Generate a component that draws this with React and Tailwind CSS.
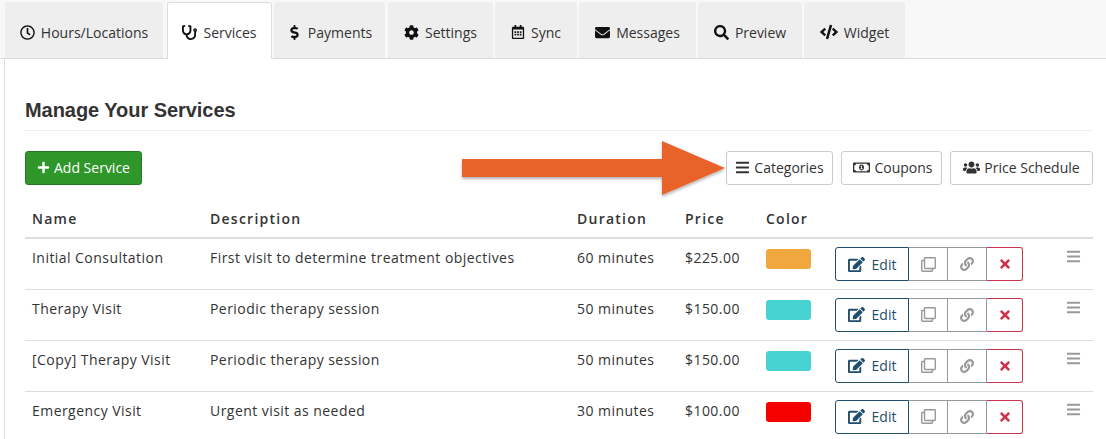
import { FaRegClock, FaStethoscope, FaDollarSign, FaCog, FaRegCalendarAlt, FaEnvelope, FaSearch, FaCode, FaPlus, FaBars, FaRegMoneyBillAlt, FaUsers, FaEdit, FaRegClone, FaLink, FaTimes } from "react-icons/fa";

const tabs = [
  { label: "Hours/Locations", icon: FaRegClock, w: "w-[158px]", size: "text-[15px]" },
  { label: "Services", icon: FaStethoscope, w: "w-[105px] ml-[2px]", size: "text-[15px]", active: true },
  { label: "Payments", icon: FaDollarSign, w: "w-[111px]", size: "text-[15px]" },
  { label: "Settings", icon: FaCog, w: "w-[105px] ml-px", size: "text-[15px]" },
  { label: "Sync", icon: FaRegCalendarAlt, w: "w-[82px]", size: "text-[14px]" },
  { label: "Messages", icon: FaEnvelope, w: "w-[117px]", size: "text-[15px]" },
  { label: "Preview", icon: FaSearch, w: "w-[104px]", size: "text-[15px]" },
  { label: "Widget", icon: FaCode, w: "w-[101px]", size: "text-[18px]" },
];

const services = [
  { name: "Initial Consultation", desc: "First visit to determine treatment objectives", dur: "60 minutes", price: "$225.00", color: "bg-[#f0a83e]" },
  { name: "Therapy Visit", desc: "Periodic therapy session", dur: "50 minutes", price: "$150.00", color: "bg-[#48d3d3]" },
  { name: "[Copy] Therapy Visit", desc: "Periodic therapy session", dur: "50 minutes", price: "$150.00", color: "bg-[#48d3d3]" },
  { name: "Emergency Visit", desc: "Urgent visit as needed", dur: "30 minutes", price: "$100.00", color: "bg-[#f70000]" },
];

function ToolButton({ icon: Icon, label, w, size }) {
  return (
    <button className={`${w} h-[34px] pb-[2px] flex items-center justify-center gap-1 bg-white border border-[#ccc] rounded-[3px] text-[14px] text-[#333]`}>
      <Icon className={size} />
      {label}
    </button>
  );
}

export default function App() {
  return (
    <div className="relative w-[1106px] h-[439px] overflow-hidden bg-white font-['Open_Sans',sans-serif] text-[14px] text-[#333]">
      {/* tab bar */}
      <div className="h-[59px] pl-[5px] pt-[2px] flex gap-[2px] bg-[#f8f8f8] border-b border-[#ddd]">
        {tabs.map((t) => {
          const Icon = t.icon;
          return (
            <div
              key={t.label}
              className={`${t.w} flex items-center justify-center gap-[6px] rounded-t-[3px] ${t.active ? "h-[57px] pt-[3px] bg-white border border-b-0 border-[#ddd] z-10" : "h-[56px] pt-[4px] bg-[#eee]"}`}
            >
              <Icon className={`${t.size} text-[#111]`} />
              <span>{t.label}</span>
            </div>
          );
        })}
      </div>

      {/* panel */}
      <div className="ml-[4px] h-[380px] border-l border-[#ddd] pl-[20px] pr-[13px]">
        <h2 className="pt-[38px] pb-[7px] font-['Liberation_Sans',sans-serif] font-bold text-[20px] leading-[26px] tracking-[-0.05px] border-b border-[#eee]">
          Manage Your Services
        </h2>

        <div className="mt-[20px] flex items-center justify-between">
          <button className="w-[117px] h-[34px] pb-[2px] flex items-center justify-center gap-1 bg-[#2f972a] border border-[#267a22] rounded-[3px] text-white">
            <FaPlus className="text-[13px]" />
            Add Service
          </button>
          <div className="flex gap-[8px]">
            <ToolButton icon={FaBars} label="Categories" w="w-[107px]" size="text-[15px]" />
            <ToolButton icon={FaRegMoneyBillAlt} label="Coupons" w="w-[101px] pl-[3px]" size="text-[17px]" />
            <ToolButton icon={FaUsers} label="Price Schedule" w="w-[143px]" size="text-[17px]" />
          </div>
        </div>

        <table className="mt-[16px] w-[1068px] table-fixed border-collapse">
          <thead>
            <tr className="h-[37px] border-b-2 border-[#ddd] text-left tracking-[1.25px]">
              <th className="w-[177px] pl-[7px] pb-[1px] font-semibold">Name</th>
              <th className="w-[367px] pl-[8px] pb-[1px] font-semibold">Description</th>
              <th className="w-[108px] pl-[8px] pb-[1px] font-semibold">Duration</th>
              <th className="w-[81px] pl-[8px] pb-[1px] font-semibold">Price</th>
              <th className="w-[69px] pl-[8px] pb-[1px] font-semibold">Color</th>
              <th className="w-[230px]"></th>
              <th></th>
            </tr>
          </thead>
          <tbody>
            {services.map((s) => (
              <tr key={s.name} className="h-[51px] border-b border-[#ddd] align-top tracking-[0.45px]">
                <td className="pl-[7px] pt-[8px]">{s.name}</td>
                <td className="pl-[8px] pt-[8px]">{s.desc}</td>
                <td className="pl-[8px] pt-[8px]">{s.dur}</td>
                <td className="pl-[8px] pt-[8px]">{s.price}</td>
                <td className="pl-[8px] pt-[10px]">
                  <div className={`w-[45px] h-[20px] rounded-[3px] ${s.color}`}></div>
                </td>
                <td className="pl-[8px] pt-[8px]">
                  <div className="flex h-[34px] tracking-normal">
                    <button className="w-[74px] flex items-center justify-center gap-[7px] border border-[#1f4e6e] rounded-l-[3px] text-[#1f4e6e]">
                      <FaEdit className="text-[17px]" />
                      Edit
                    </button>
                    <button className="w-[39px] flex items-center justify-center border border-l-0 border-[#999] text-[#999]">
                      <FaRegClone className="text-[15px]" />
                    </button>
                    <button className="w-[39px] flex items-center justify-center border border-l-0 border-[#999] text-[#999]">
                      <FaLink className="text-[14px]" />
                    </button>
                    <button className="w-[36px] flex items-center justify-center border border-l-0 border-[#c9344a] rounded-r-[3px] text-[#c9344a]">
                      <FaTimes className="text-[14px]" />
                    </button>
                  </div>
                </td>
                <td className="pt-[10px] pl-[9px]">
                  <FaBars className="text-[15px] text-[#999]" />
                </td>
              </tr>
            ))}
          </tbody>
        </table>
      </div>

      {/* annotation arrow */}
      <svg className="absolute left-[455px] top-[135px]" width="275" height="70" viewBox="0 0 275 70">
        <defs>
          <filter id="arrowShadow" x="-5%" y="-15%" width="110%" height="135%">
            <feDropShadow dx="0" dy="2" stdDeviation="1.5" floodColor="#000" floodOpacity="0.3" />
          </filter>
        </defs>
        <path d="M7 24H207V6L270 33L207 60V42H7Z" fill="#e8632c" filter="url(#arrowShadow)" />
      </svg>
    </div>
  );
}
